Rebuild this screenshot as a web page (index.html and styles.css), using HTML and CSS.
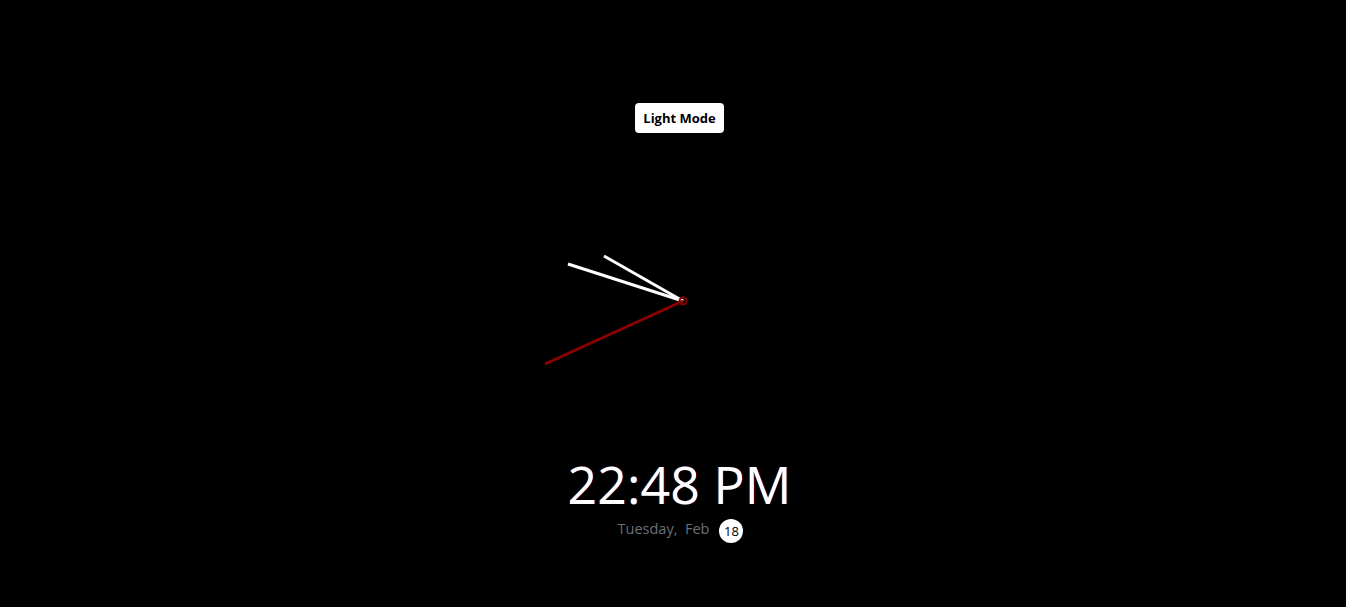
FILE: index.html
```html
<!DOCTYPE html>
<html>
<head>
<meta charset="utf-8">
<link rel="stylesheet" href="styles.css">
</head>
<body>
<div class="page">
  <button class="toggle">Light Mode</button>
  <div class="clock">
    <svg class="face" width="300" height="300" viewBox="0 0 300 300">
      <line class="hand" x1="150" y1="150" x2="71" y2="105"/>
      <line class="hand" x1="150" y1="150" x2="35" y2="113"/>
      <line class="second" x1="150" y1="150" x2="12" y2="213"/>
      <circle class="center" cx="150" cy="150" r="3.5"/>
    </svg>
  </div>
  <div class="time">22:48 PM</div>
  <div class="date">Tuesday, &nbsp;Feb <span class="day">18</span></div>
</div>
</body>
</html>
```
FILE: styles.css
```css
html, body {
  margin: 0;
  padding: 0;
  background: #000;
  height: 100%;
}
.page {
  display: flex;
  flex-direction: column;
  align-items: center;
  padding-top: 103px;
  padding-left: 20px;
  font-family: "Open Sans", "Liberation Sans", sans-serif;
}
.toggle {
  background: #fff;
  color: #000;
  border: none;
  border-radius: 4px;
  height: 30px;
  width: 89px;
  padding: 0;
  font-family: "Open Sans", sans-serif;
  font-weight: 700;
  font-size: 13px;
  margin-right: 7px;
  cursor: pointer;
}
.clock {
  margin-top: 18px;
  width: 300px;
  height: 300px;
}
.face { display: block; }
.hand {
  stroke: #fff;
  stroke-width: 3;
}
.second {
  stroke: #8b0000;
  stroke-width: 3;
}
.center {
  fill: none;
  stroke: #8b0000;
  stroke-width: 2;
}
.time {
  color: #fff;
  font-size: 52px;
  line-height: 56px;
  margin-top: 5px;
  margin-right: 7px;
  text-shadow: -1px 0 rgba(0,120,255,0.35), 1px 0 rgba(255,0,0,0.35);
}
.date {
  color: #6b6f78;
  font-size: 14.5px;
  line-height: 24px;
  display: flex;
  align-items: center;
  margin-top: 2px;
  margin-right: 5px;
}
.day {
  display: inline-flex;
  align-items: center;
  justify-content: center;
  width: 24px;
  height: 24px;
  border-radius: 50%;
  background: #fff;
  color: #000;
  font-size: 13px;
  margin-left: 10px;
  margin-top: 5px;
}
```
